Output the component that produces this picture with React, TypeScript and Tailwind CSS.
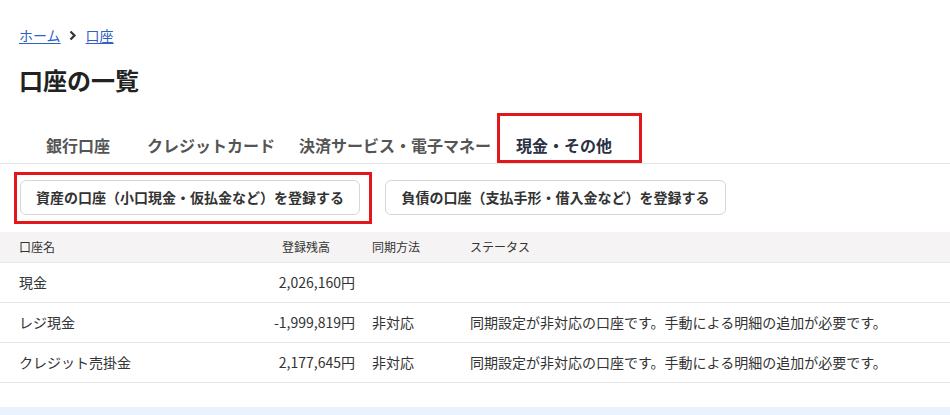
import React from 'react'

const font = "font-['Noto_Sans_CJK_JP','Noto_Sans',sans-serif]"

const rows = [
  { name: '現金', amount: '2,026,160円', sync: '', status: '' },
  {
    name: 'レジ現金',
    amount: '-1,999,819円',
    sync: '非対応',
    status: '同期設定が非対応の口座です。手動による明細の追加が必要です。',
  },
  {
    name: 'クレジット売掛金',
    amount: '2,177,645円',
    sync: '非対応',
    status: '同期設定が非対応の口座です。手動による明細の追加が必要です。',
  },
]

export default function App() {
  return (
    <div className={`${font} min-h-[415px] bg-white text-[#333]`}>
      {/* breadcrumb */}
      <nav className="flex items-center pl-[19px] pt-[25px] text-[14px] leading-[20px]">
        <a href="#" className="text-[#2f5fc7] underline underline-offset-2">ホーム</a>
        <svg className="ml-[8px] mr-[9px]" width="8" height="11" viewBox="0 0 8 11" fill="none">
          <path d="M1.5 1.5L5.5 5.5L1.5 9.5" stroke="#333" strokeWidth="2.2" />
        </svg>
        <a href="#" className="text-[#2f5fc7] underline underline-offset-2">口座</a>
      </nav>

      <h1 className="mt-[19px] pl-[19px] text-[24px] font-bold leading-[32px] text-[#222]">口座の一覧</h1>

      {/* tabs */}
      <div className="mt-[17px] flex items-end border-b border-[#e5e5e5] pl-[46px] text-[16px] font-bold leading-[24px]">
        <div className="flex h-[50px] items-end pb-[6px] text-[#555]">銀行口座</div>
        <div className="ml-[37px] flex h-[50px] items-end pb-[6px] text-[#555]">クレジットカード</div>
        <div className="ml-[24px] flex h-[50px] items-end pb-[6px] text-[#555]">決済サービス・電子マネー</div>
        <div className="ml-[6px] flex h-[50px] w-[145px] items-end border-[3px] border-[#e3161b] pb-[3px] pl-[16px] text-[#2b3142]">
          現金・その他
        </div>
      </div>

      {/* action buttons */}
      <div className="mt-[8px] flex items-start pl-[14px]">
        <div className="border-[3px] border-[#e3161b] pb-[6px] pl-[3px] pr-[9px] pt-[5px]">
          <button className="h-[35px] w-[340px] rounded-[6px] border border-[#d6d6d6] bg-white text-[14px] font-bold text-[#333]">
            資産の口座（小口現金・仮払金など）を登録する
          </button>
        </div>
        <button className="ml-[13px] mt-[8px] h-[35px] w-[341px] rounded-[6px] border border-[#d6d6d6] bg-white text-[14px] font-bold text-[#333]">
          負債の口座（支払手形・借入金など）を登録する
        </button>
      </div>

      {/* table */}
      <div className="mt-[8px]">
        <div className="flex h-[31px] items-center border-b border-[#e5e5e5] bg-[#f5f3f3] pl-[19px] text-[12px]">
          <div className="w-[236px]">口座名</div>
          <div className="w-[100px] pr-[25px] text-right">登録残高</div>
          <div className="ml-[17px] w-[98px]">同期方法</div>
          <div>ステータス</div>
        </div>
        {rows.map((row, i) => (
          <div key={i} className="flex h-[40px] items-center border-b border-[#e5e5e5] pl-[19px] text-[14px]">
            <div className="w-[236px]">{row.name}</div>
            <div className="w-[100px] text-right">{row.amount}</div>
            <div className="ml-[17px] w-[98px]">{row.sync}</div>
            <div>{row.status}</div>
          </div>
        ))}
      </div>

      <div className="mt-[24px] h-[20px] bg-[#eaf3fd]" />
    </div>
  )
}
